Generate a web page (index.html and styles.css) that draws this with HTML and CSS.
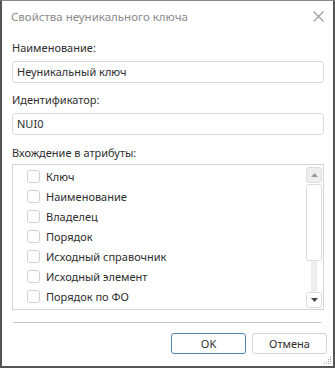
FILE: index.html
```html
<!DOCTYPE html>
<html lang="ru">
	<head>
		<title>Свойства неуникального ключа</title>
		<meta charset="utf-8">
		<link rel="stylesheet" href="styles.css">
	</head>
	<body>
		<div class="dialog">
			<div class="head">
				<span class="title">Свойства неуникального ключа</span>
				<svg class="close" width="11" height="11" viewBox="0 0 11 11"><path d="M0.5 0.5L10.5 10.5M10.5 0.5L0.5 10.5" stroke="#9a9a9a" stroke-width="1.1"/></svg>
			</div>
			<div class="body">
				<div class="lbl">Наименование:</div>
				<div class="field">Неуникальный ключ</div>
				<div class="lbl">Идентификатор:</div>
				<div class="field">NUI0</div>
				<div class="lbl">Вхождение в атрибуты:</div>
				<div class="list">
					<ul class="items">
						<li><span class="box"></span>Ключ</li>
						<li><span class="box"></span>Наименование</li>
						<li><span class="box"></span>Владелец</li>
						<li><span class="box"></span>Порядок</li>
						<li><span class="box"></span>Исходный справочник</li>
						<li><span class="box"></span>Исходный элемент</li>
						<li><span class="box"></span>Порядок по ФО</li>
					</ul>
					<div class="scroll">
						<div class="sbtn up"><svg width="7" height="4" viewBox="0 0 7 4"><path d="M0 4L3.5 0L7 4Z" fill="#999"/></svg></div>
						<div class="thumb"></div>
						<div class="track"></div>
						<div class="sbtn down"><svg width="7" height="4" viewBox="0 0 7 4"><path d="M0 0L3.5 4L7 0Z" fill="#444"/></svg></div>
					</div>
				</div>
			</div>
			<div class="foot">
				<div class="sep"></div>
				<div class="btns">
					<button class="btn ok">OK</button>
					<button class="btn">Отмена</button>
				</div>
			</div>
			<svg class="grip" width="8" height="8" viewBox="0 0 8 8">
				<rect x="6" y="0" width="1" height="1" fill="#aaa"/>
				<rect x="4" y="2" width="1" height="1" fill="#aaa"/>
				<rect x="6" y="2" width="1" height="1" fill="#aaa"/>
				<rect x="2" y="4" width="1" height="1" fill="#aaa"/>
				<rect x="4" y="4" width="1" height="1" fill="#aaa"/>
				<rect x="6" y="4" width="1" height="1" fill="#aaa"/>
				<rect x="0" y="6" width="1" height="1" fill="#aaa"/>
				<rect x="2" y="6" width="1" height="1" fill="#aaa"/>
				<rect x="4" y="6" width="1" height="1" fill="#aaa"/>
				<rect x="6" y="6" width="1" height="1" fill="#aaa"/>
			</svg>
		</div>
	</body>
</html>
```

FILE: styles.css
```css
html, body {
	margin: 0;
	background-color: #fff;
	font-family: 'Noto Sans', 'DejaVu Sans', sans-serif;
	font-size: 11px;
	color: #2e2e2e;
}
.dialog {
	position: relative;
	box-sizing: border-box;
	width: 335px;
	height: 368px;
	border: 2px solid #555;
	border-top: 1px solid #8a8a8a;
	display: flex;
	flex-direction: column;
}
.head {
	height: 31px;
	display: flex;
	align-items: center;
	justify-content: space-between;
	padding: 0 9px 0 9px;
}
.title {
	font-size: 11.5px;
	color: #8a8a8a;
}
.close {
	display: block;
}
.body {
	padding: 0 9px 0 10px;
	flex: 1;
}
.lbl {
	line-height: 16px;
	margin-top: 9px;
	margin-bottom: 5px;
}
.lbl:first-child {
	margin-top: 8px;
}
.lbl:nth-child(5) {
	margin-top: 10px;
	margin-bottom: 3px;
}
.field {
	box-sizing: border-box;
	height: 22px;
	line-height: 20px;
	border: 1px solid #dcdcdc;
	border-radius: 3px;
	padding-left: 4px;
}
.list {
	box-sizing: border-box;
	height: 146px;
	border: 1px solid #d4d4d4;
	display: flex;
}
.items {
	list-style: none;
	margin: 0;
	padding: 1px 0 0 14px;
	flex: 1;
}
.items li {
	height: 20px;
	display: flex;
	align-items: center;
}
.box {
	box-sizing: border-box;
	width: 13px;
	height: 13px;
	border: 1px solid #d0d0d0;
	border-radius: 3px;
	margin-right: 6px;
}
.scroll {
	width: 16px;
	margin: 2px 1px 1px 0;
	display: flex;
	flex-direction: column;
	align-items: center;
}
.sbtn {
	box-sizing: border-box;
	width: 16px;
	height: 16px;
	border: 1px solid #dcdcdc;
	border-radius: 3px;
	display: flex;
	align-items: center;
	justify-content: center;
}
.sbtn svg {
	display: block;
}
.up {
	background-color: #eee;
}
.down {
	background-color: #fff;
}
.thumb {
	box-sizing: border-box;
	width: 16px;
	height: 77px;
	border: 1px solid #dcdcdc;
	border-radius: 3px;
	margin-top: 1px;
}
.track {
	width: 6px;
	flex: 1;
	background-color: #eee;
}
.foot {
	padding: 0 6px 12px 11px;
}
.sep {
	height: 1px;
	background-color: #c4c4c4;
	margin-right: 6px;
}
.btns {
	display: flex;
	justify-content: flex-end;
	gap: 6px;
	margin-top: 10px;
}
.btn {
	box-sizing: border-box;
	width: 75px;
	height: 21px;
	padding: 0;
	font-family: 'Noto Sans', 'DejaVu Sans', sans-serif;
	font-size: 11px;
	color: #2e2e2e;
	background-color: #fff;
	border: 1px solid #d4d4d4;
	border-radius: 3px;
}
.ok {
	border-color: #4a86b8;
}
.grip {
	position: absolute;
	right: 1px;
	bottom: 1px;
}
```
